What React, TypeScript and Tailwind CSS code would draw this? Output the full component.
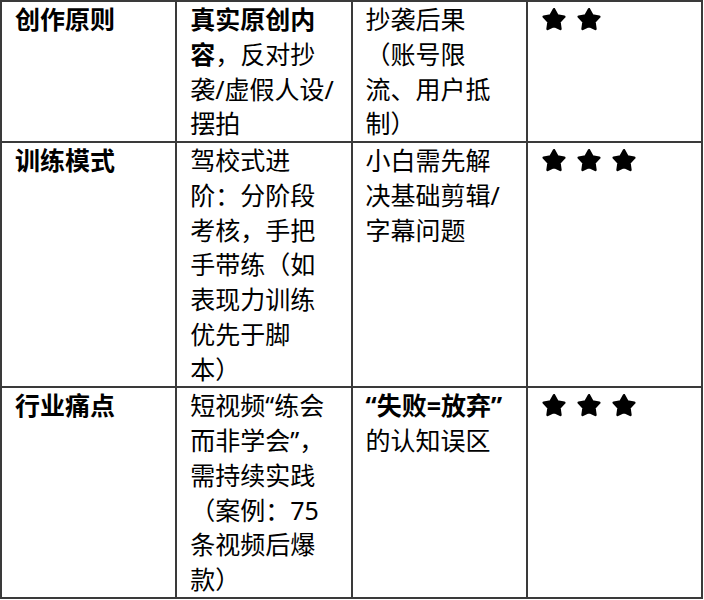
import React from 'react';

const Star = () => (
  <svg width="26" height="26" viewBox="0 0 24 24" className="shrink-0">
    <polygon
      points="12,3 15.2,8.9 21.5,9.9 17,14.6 17.9,21.1 12,18.3 6.1,21.1 7,14.6 2.5,9.9 8.8,8.9"
      fill="#000"
      stroke="#000"
      strokeWidth="2.4"
      strokeLinejoin="round"
    />
  </svg>
);

const Stars = ({ count }: { count: number }) => (
  <div className="flex gap-[9px] pt-[4px]">
    {Array.from({ length: count }).map((_, i) => (
      <Star key={i} />
    ))}
  </div>
);

const cell = 'border-2 border-[#3a3a3a] align-top px-[13px] py-0 whitespace-nowrap';

export default function App() {
  return (
    <div
      className="bg-white w-[704px] h-[600px] text-black text-[25px] leading-[34.75px]"
      style={{ fontFamily: '"Noto Sans", "Noto Sans CJK SC", sans-serif' }}
    >
      <table className="w-[703px] table-fixed border-collapse">
        <tbody>
          <tr>
            <td className={`${cell} font-bold`}>创作原则</td>
            <td className={cell}>
              <b>真实原创内<br />容</b>，反对抄<br />袭/虚假人设/<br />摆拍
            </td>
            <td className={cell}>
              抄袭后果<br />（账号限<br />流、用户抵<br />制）
            </td>
            <td className={cell}>
              <Stars count={2} />
            </td>
          </tr>
          <tr>
            <td className={`${cell} font-bold`}>训练模式</td>
            <td className={cell}>
              驾校式进<br />阶：分阶段<br />考核，手把<br />手带练（如<br />表现力训练<br />优先于脚<br />本）
            </td>
            <td className={cell}>
              小白需先解<br />决基础剪辑/<br />字幕问题
            </td>
            <td className={cell}>
              <Stars count={3} />
            </td>
          </tr>
          <tr>
            <td className={`${cell} font-bold`}>行业痛点</td>
            <td className={cell}>
              短视频“练会<br />而非学会”，<br />需持续实践<br />（案例：75<br />条视频后爆<br />款）
            </td>
            <td className={cell}>
              <b>“失败=放弃”</b><br />的认知误区
            </td>
            <td className={cell}>
              <Stars count={3} />
            </td>
          </tr>
        </tbody>
      </table>
    </div>
  );
}
